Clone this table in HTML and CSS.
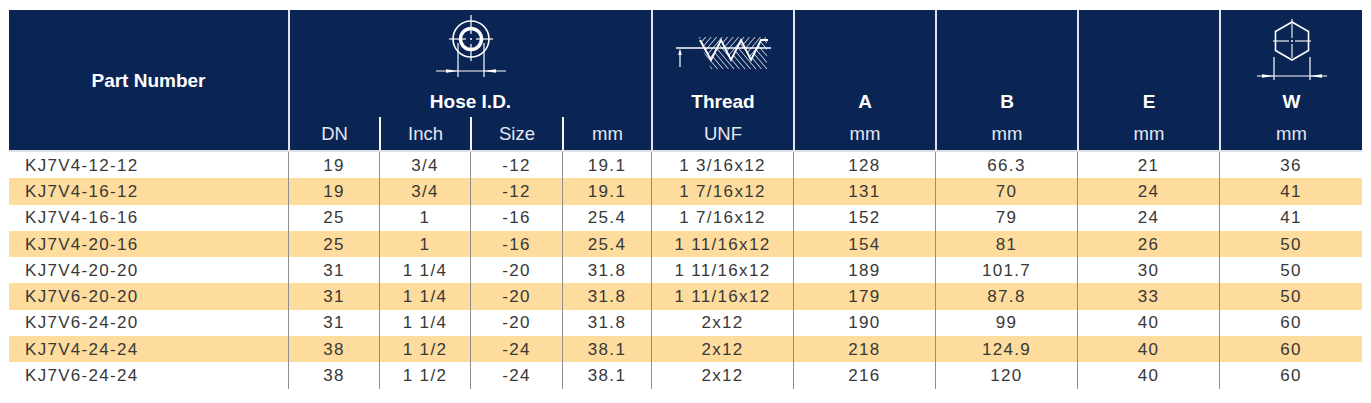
FILE: index.html
```html
<!DOCTYPE html>
<html lang="en">
<head>
<meta charset="utf-8">
<title>KJ7 fittings</title>
<link rel="stylesheet" href="styles.css">
</head>
<body>
<div class="sheet">
  <div class="thead">
    <div class="h-pn">Part Number</div>

    <div class="h-group hose">
      <div class="h-icon">
        <svg class="ico" width="80" height="72" viewBox="0 0 80 72" fill="none" stroke="#fff">
          <circle cx="40" cy="29" r="18" stroke-width="1.6"/>
          <circle cx="40" cy="29" r="10.5" stroke-width="3.4"/>
          <circle cx="40" cy="29" r="1" fill="#fff" stroke="none"/>
          <line x1="40" y1="5" x2="40" y2="24" stroke-width="1.2"/>
          <line x1="40" y1="34" x2="40" y2="51" stroke-width="1.2"/>
          <line x1="18" y1="29" x2="35" y2="29" stroke-width="1.2"/>
          <line x1="45" y1="29" x2="62" y2="29" stroke-width="1.2"/>
          <line x1="27" y1="33" x2="27" y2="67" stroke-width="1.2"/>
          <line x1="53" y1="33" x2="53" y2="67" stroke-width="1.2"/>
          <line x1="5" y1="61" x2="75" y2="61" stroke-width="1.2"/>
          <polygon points="27,61 15,59.3 15,62.7" fill="#fff" stroke="none"/>
          <polygon points="53,61 65,59.3 65,62.7" fill="#fff" stroke="none"/>
        </svg>
      </div>
      <div class="h-title">Hose I.D.</div>
      <div class="h-units">
        <div class="u w-dn">DN</div>
        <div class="u w-inch sub">Inch</div>
        <div class="u w-size sub">Size</div>
        <div class="u w-mm sub">mm</div>
      </div>
    </div>

    <div class="h-group w-col">
      <div class="h-icon">
        <svg class="ico" width="100" height="64" viewBox="0 0 100 64" fill="none" stroke="#fff">
          <defs>
            <pattern id="hatchUp" width="4.2" height="4.2" patternUnits="userSpaceOnUse" patternTransform="rotate(40)">
              <line x1="0" y1="0" x2="0" y2="4.2" stroke="#fff" stroke-width="1.3"/>
            </pattern>
            <pattern id="hatchDown" width="4.2" height="4.2" patternUnits="userSpaceOnUse" patternTransform="rotate(-40)">
              <line x1="0" y1="0" x2="0" y2="4.2" stroke="#fff" stroke-width="1.3"/>
            </pattern>
          </defs>
          <polygon points="26,27 93,27 93,31 88,31 78,50 68,30 58,50 48,30 38,50 28,30 26,30" fill="url(#hatchUp)" stroke="none"/>
          <polygon points="30,40 38,50 48,30 58,50 68,30 78,50 88,31 94,31 94,59 38,59" fill="url(#hatchDown)" stroke="none"/>
          <polyline points="27,30 38,50 48,30 58,50 68,30 78,50 88,30 95,30" stroke-width="1.9"/>
          <line x1="3" y1="38" x2="98" y2="38" stroke-width="1.5"/>
          <line x1="7" y1="41" x2="7" y2="57" stroke-width="1.2"/>
          <polygon points="7,38.5 5.2,45 8.8,45" fill="#fff" stroke="none"/>
        </svg>
      </div>
      <div class="h-title">Thread</div>
      <div class="h-unit">UNF</div>
    </div>

    <div class="h-group w-col">
      <div class="h-icon"></div>
      <div class="h-title">A</div>
      <div class="h-unit">mm</div>
    </div>
    <div class="h-group w-col">
      <div class="h-icon"></div>
      <div class="h-title">B</div>
      <div class="h-unit">mm</div>
    </div>
    <div class="h-group w-col">
      <div class="h-icon"></div>
      <div class="h-title">E</div>
      <div class="h-unit">mm</div>
    </div>
    <div class="h-group w-last">
      <div class="h-icon">
        <svg class="ico" width="80" height="72" viewBox="0 0 80 72" fill="none" stroke="#fff">
          <polygon points="40,12 56.5,21.5 56.5,40.5 40,50 23.5,40.5 23.5,21.5" stroke-width="1.6"/>
          <line x1="21" y1="31" x2="37" y2="31" stroke-width="1.1"/>
          <line x1="43" y1="31" x2="59" y2="31" stroke-width="1.1"/>
          <line x1="40" y1="9" x2="40" y2="28" stroke-width="1.1"/>
          <line x1="40" y1="34" x2="40" y2="48" stroke-width="1.1"/>
          <circle cx="40" cy="31" r="1" fill="#fff" stroke="none"/>
          <line x1="22" y1="47" x2="22" y2="70" stroke-width="1.2"/>
          <line x1="58" y1="47" x2="58" y2="70" stroke-width="1.2"/>
          <line x1="5" y1="66" x2="75" y2="66" stroke-width="1.2"/>
          <polygon points="22,66 10,64.3 10,67.7" fill="#fff" stroke="none"/>
          <polygon points="58,66 70,64.3 70,67.7" fill="#fff" stroke="none"/>
        </svg>
      </div>
      <div class="h-title">W</div>
      <div class="h-unit">mm</div>
    </div>
  </div>

  <div class="tbody">
    <div class="row">
      <div class="c w-pn">KJ7V4-12-12</div><div class="c w-dnb">19</div><div class="c w-inchb">3/4</div><div class="c w-sizeb">-12</div><div class="c w-mmb">19.1</div><div class="c w-colb">1 3/16x12</div><div class="c w-colb">128</div><div class="c w-colb">66.3</div><div class="c w-colb">21</div><div class="c w-lastb">36</div>
    </div>
    <div class="row alt">
      <div class="c w-pn">KJ7V4-16-12</div><div class="c w-dnb">19</div><div class="c w-inchb">3/4</div><div class="c w-sizeb">-12</div><div class="c w-mmb">19.1</div><div class="c w-colb">1 7/16x12</div><div class="c w-colb">131</div><div class="c w-colb">70</div><div class="c w-colb">24</div><div class="c w-lastb">41</div>
    </div>
    <div class="row">
      <div class="c w-pn">KJ7V4-16-16</div><div class="c w-dnb">25</div><div class="c w-inchb">1</div><div class="c w-sizeb">-16</div><div class="c w-mmb">25.4</div><div class="c w-colb">1 7/16x12</div><div class="c w-colb">152</div><div class="c w-colb">79</div><div class="c w-colb">24</div><div class="c w-lastb">41</div>
    </div>
    <div class="row alt">
      <div class="c w-pn">KJ7V4-20-16</div><div class="c w-dnb">25</div><div class="c w-inchb">1</div><div class="c w-sizeb">-16</div><div class="c w-mmb">25.4</div><div class="c w-colb">1 11/16x12</div><div class="c w-colb">154</div><div class="c w-colb">81</div><div class="c w-colb">26</div><div class="c w-lastb">50</div>
    </div>
    <div class="row">
      <div class="c w-pn">KJ7V4-20-20</div><div class="c w-dnb">31</div><div class="c w-inchb">1 1/4</div><div class="c w-sizeb">-20</div><div class="c w-mmb">31.8</div><div class="c w-colb">1 11/16x12</div><div class="c w-colb">189</div><div class="c w-colb">101.7</div><div class="c w-colb">30</div><div class="c w-lastb">50</div>
    </div>
    <div class="row alt">
      <div class="c w-pn">KJ7V6-20-20</div><div class="c w-dnb">31</div><div class="c w-inchb">1 1/4</div><div class="c w-sizeb">-20</div><div class="c w-mmb">31.8</div><div class="c w-colb">1 11/16x12</div><div class="c w-colb">179</div><div class="c w-colb">87.8</div><div class="c w-colb">33</div><div class="c w-lastb">50</div>
    </div>
    <div class="row">
      <div class="c w-pn">KJ7V6-24-20</div><div class="c w-dnb">31</div><div class="c w-inchb">1 1/4</div><div class="c w-sizeb">-20</div><div class="c w-mmb">31.8</div><div class="c w-colb">2x12</div><div class="c w-colb">190</div><div class="c w-colb">99</div><div class="c w-colb">40</div><div class="c w-lastb">60</div>
    </div>
    <div class="row alt">
      <div class="c w-pn">KJ7V4-24-24</div><div class="c w-dnb">38</div><div class="c w-inchb">1 1/2</div><div class="c w-sizeb">-24</div><div class="c w-mmb">38.1</div><div class="c w-colb">2x12</div><div class="c w-colb">218</div><div class="c w-colb">124.9</div><div class="c w-colb">40</div><div class="c w-lastb">60</div>
    </div>
    <div class="row">
      <div class="c w-pn">KJ7V6-24-24</div><div class="c w-dnb">38</div><div class="c w-inchb">1 1/2</div><div class="c w-sizeb">-24</div><div class="c w-mmb">38.1</div><div class="c w-colb">2x12</div><div class="c w-colb">216</div><div class="c w-colb">120</div><div class="c w-colb">40</div><div class="c w-lastb">60</div>
    </div>
  </div>
</div>
</body>
</html>
```

FILE: styles.css
```css
* { box-sizing: border-box; }

html, body {
  margin: 0;
  padding: 0;
  background: #ffffff;
}

body {
  font-family: "Liberation Sans", Arial, sans-serif;
}

.sheet {
  margin: 10px 0 0 9px;
  width: 1353px;
}

/* ---------- header ---------- */
.thead {
  display: flex;
  height: 142px;
  background: #0a2454;
  border-bottom: 2px solid #dde1e8;
  color: #ffffff;
}

.h-pn {
  width: 279px;
  display: flex;
  align-items: center;
  justify-content: center;
  font-weight: bold;
  font-size: 19px;
  padding-top: 2px;
}

.h-group {
  display: flex;
  flex-direction: column;
  border-left: 2px solid #dfe4ec;
}

.hose { width: 363px; }
.w-col { width: 142px; }
.w-last { width: 143px; }

.h-icon {
  height: 77px;
  display: flex;
  justify-content: center;
  align-items: flex-start;
}

.ico { display: block; }

.h-title {
  height: 30px;
  display: flex;
  align-items: center;
  justify-content: center;
  font-weight: bold;
  font-size: 19px;
}

.h-unit,
.u {
  height: 33px;
  display: flex;
  align-items: center;
  justify-content: center;
  font-size: 18.5px;
  color: #e4e8f0;
}

.h-units {
  display: flex;
  height: 33px;
}

.u.sub { border-left: 2px solid #f2f4f8; }

.w-dn { width: 89px; }
.w-inch { width: 91px; }
.w-size { width: 92px; }
.w-mm { width: 89px; }

/* ---------- body ---------- */
.row {
  display: flex;
  height: 26.3px;
  background: #ffffff;
}

.row.alt { background: #fddc9d; }

.c {
  display: flex;
  align-items: center;
  justify-content: center;
  font-size: 17px;
  letter-spacing: 1.3px;
  color: #383838;
  border-left: 1px solid #8e8e8e;
  padding-top: 1px;
}

.c.w-pn {
  width: 279px;
  border-left: none;
  justify-content: flex-start;
  padding-left: 16px;
}

.w-dnb { width: 91px; }
.w-inchb { width: 91px; }
.w-sizeb { width: 92px; }
.w-mmb { width: 89px; }
.w-colb { width: 142px; }
.w-lastb { width: 143px; }
```
